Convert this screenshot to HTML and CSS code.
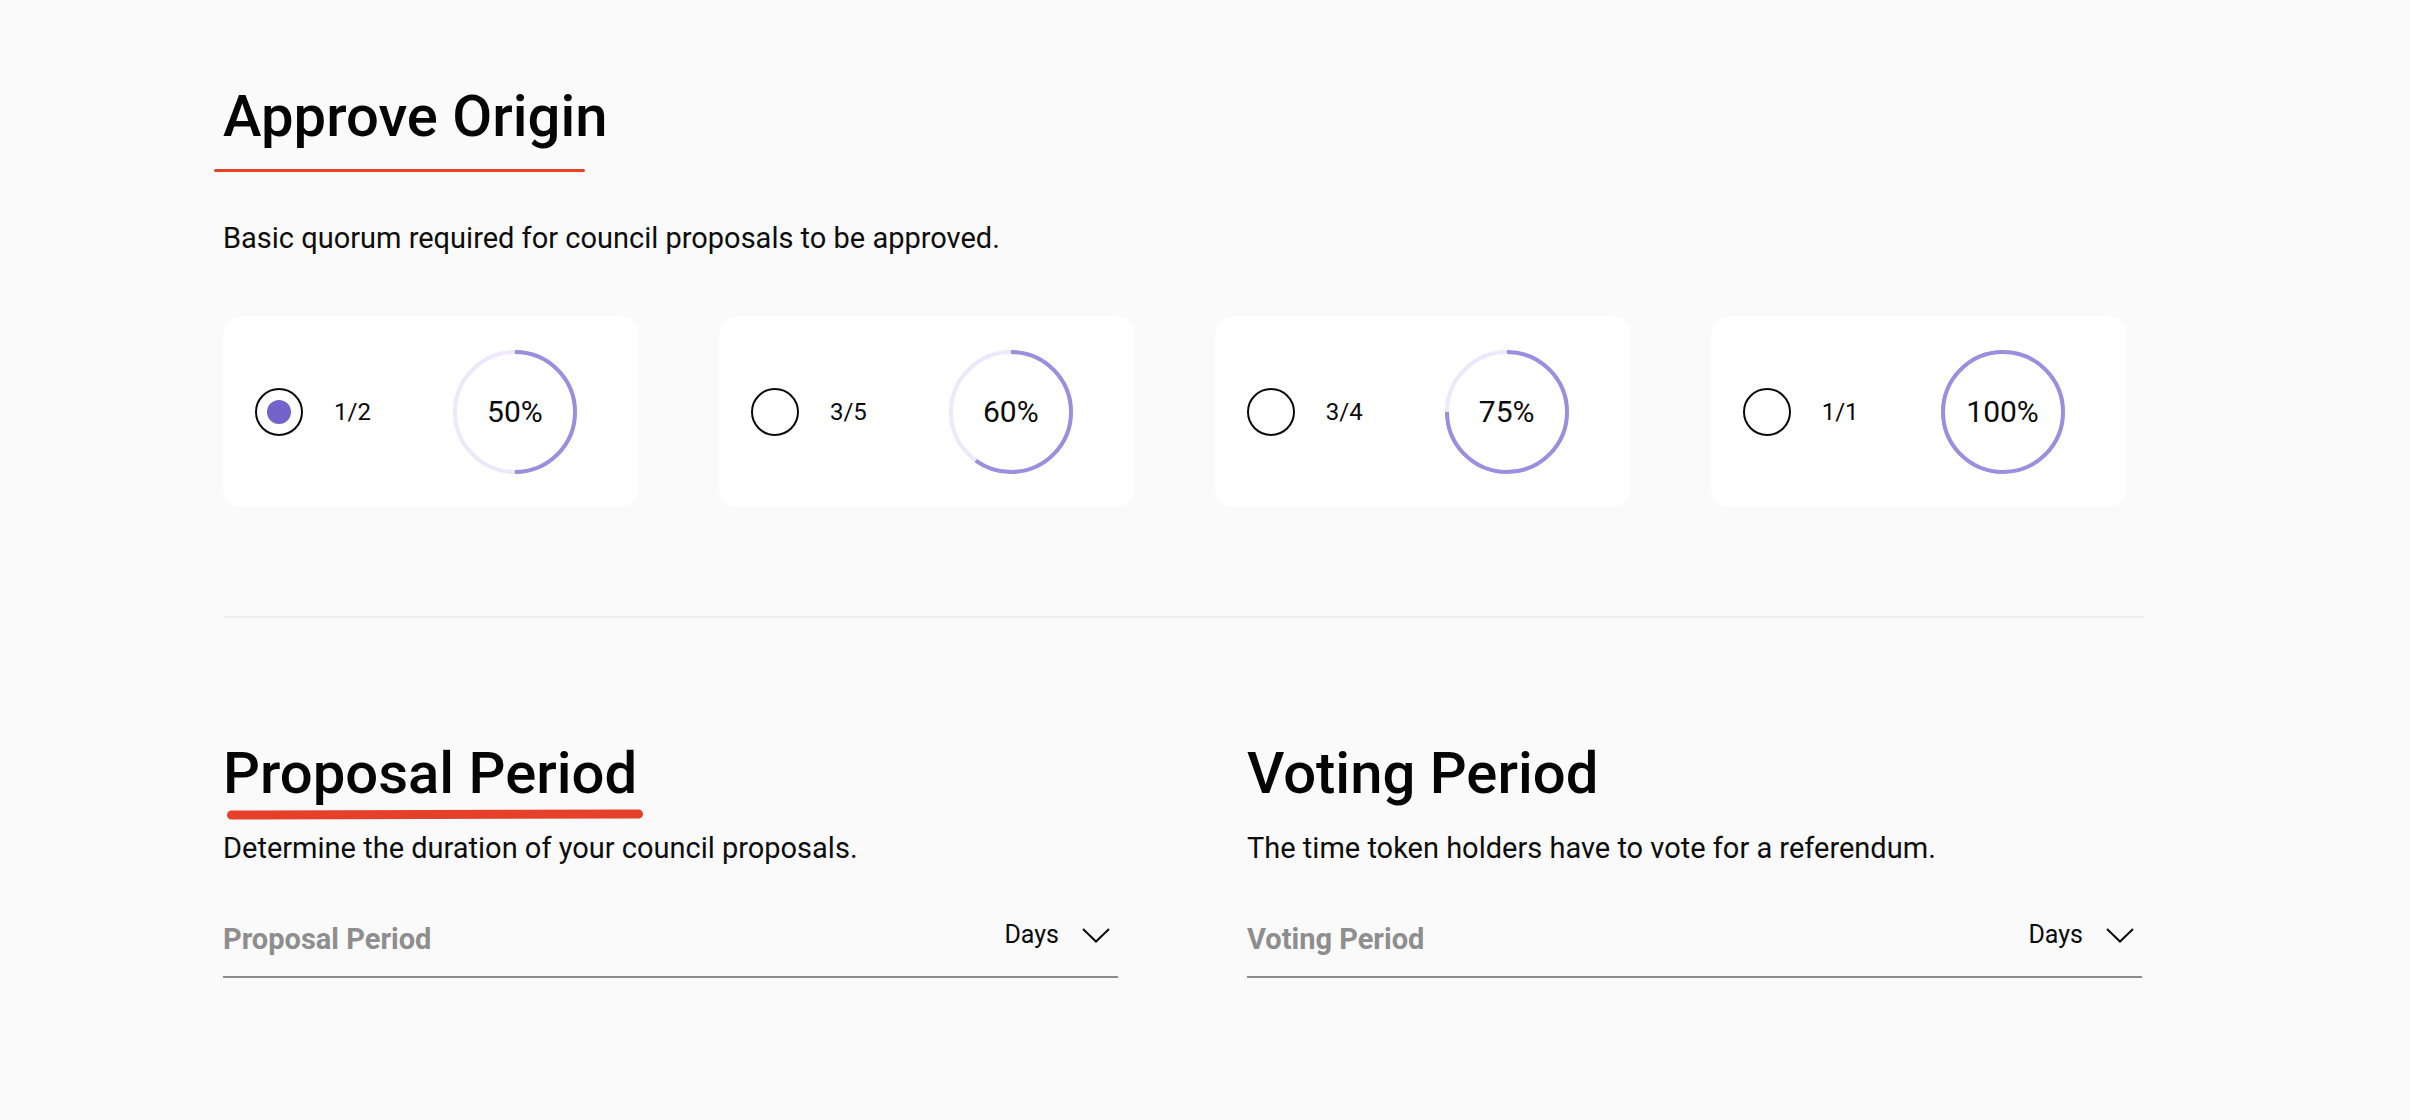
FILE: index.html
```html
<!DOCTYPE html>
<html lang="en">
<head>
<meta charset="utf-8">
<title>Council settings</title>
<link rel="stylesheet" href="styles.css">
</head>
<body>
<main class="page">
  <section class="origin">
    <h1 class="title">Approve Origin</h1>
    <div class="rule-thin"></div>
    <p class="desc desc-origin">Basic quorum required for council proposals to be approved.</p>
    <div class="cards">
      <label class="card">
        <span class="radio radio-on"><span class="dot"></span></span>
        <span class="frac">1/2</span>
        <span class="ring">
          <svg viewBox="0 0 124 124" width="124" height="124"><circle class="track" cx="62" cy="62" r="60"/><circle class="arc" cx="62" cy="62" r="60" pathLength="100" style="stroke-dasharray:50 100"/></svg>
          <span class="pct">50%</span>
        </span>
      </label>
      <label class="card">
        <span class="radio"></span>
        <span class="frac">3/5</span>
        <span class="ring">
          <svg viewBox="0 0 124 124" width="124" height="124"><circle class="track" cx="62" cy="62" r="60"/><circle class="arc" cx="62" cy="62" r="60" pathLength="100" style="stroke-dasharray:60 100"/></svg>
          <span class="pct">60%</span>
        </span>
      </label>
      <label class="card">
        <span class="radio"></span>
        <span class="frac">3/4</span>
        <span class="ring">
          <svg viewBox="0 0 124 124" width="124" height="124"><circle class="track" cx="62" cy="62" r="60"/><circle class="arc" cx="62" cy="62" r="60" pathLength="100" style="stroke-dasharray:75 100"/></svg>
          <span class="pct">75%</span>
        </span>
      </label>
      <label class="card">
        <span class="radio"></span>
        <span class="frac">1/1</span>
        <span class="ring">
          <svg viewBox="0 0 124 124" width="124" height="124"><circle class="track" cx="62" cy="62" r="60"/><circle class="arc" cx="62" cy="62" r="60" pathLength="100" style="stroke-dasharray:100 100"/></svg>
          <span class="pct">100%</span>
        </span>
      </label>
    </div>
  </section>

  <hr class="divider">

  <section class="periods">
    <div class="period">
      <h2 class="title">Proposal Period</h2>
      <div class="brush"></div>
      <p class="desc desc-period">Determine the duration of your council proposals.</p>
      <div class="field">
        <span class="field-label">Proposal Period</span>
        <span class="unit">Days
          <svg class="chev" viewBox="0 0 28 15" width="28" height="15"><path d="M1 1 L14 13.5 L27 1"/></svg>
        </span>
      </div>
    </div>
    <div class="period">
      <h2 class="title">Voting Period</h2>
      <div class="brush brush-none"></div>
      <p class="desc desc-period">The time token holders have to vote for a referendum.</p>
      <div class="field">
        <span class="field-label">Voting Period</span>
        <span class="unit">Days
          <svg class="chev" viewBox="0 0 28 15" width="28" height="15"><path d="M1 1 L14 13.5 L27 1"/></svg>
        </span>
      </div>
    </div>
  </section>
</main>
</body>
</html>
```
FILE: styles.css
```css
html, body {
  margin: 0;
  padding: 0;
  background: #fafafa;
}
body {
  font-family: Roboto, "Noto Sans", sans-serif;
  color: #0b0b0b;
}
.page {
  width: 1919px;
  padding: 87px 0 0 223px;
}
.title {
  margin: 0;
  font-size: 58px;
  line-height: 58px;
  font-weight: 500;
  letter-spacing: 0;
  color: #050505;
}
.rule-thin {
  width: 371px;
  height: 3px;
  margin: 24px 0 0 -9px;
  background: #e8432a;
  border-radius: 2px;
}
.desc {
  margin: 0;
  font-size: 29px;
  line-height: 35px;
  font-weight: 400;
  color: #0d0d0d;
}
.desc-origin {
  margin-top: 49px;
}
.cards {
  display: flex;
  gap: 80px;
  margin-top: 60px;
}
.card {
  display: flex;
  align-items: center;
  height: 191px;
  box-sizing: border-box;
  padding: 0 62px 0 32px;
  background: #ffffff;
  border-radius: 20px;
}
.radio {
  width: 48px;
  height: 48px;
  box-sizing: border-box;
  border: 2px solid #0a0a0a;
  border-radius: 50%;
  display: flex;
  align-items: center;
  justify-content: center;
  flex: none;
}
.dot {
  width: 24px;
  height: 24px;
  border-radius: 50%;
  background: #7262c9;
}
.frac {
  margin-left: 31px;
  margin-right: 82px;
  font-size: 24px;
  line-height: 30px;
}
.ring {
  position: relative;
  width: 124px;
  height: 124px;
  display: flex;
  align-items: center;
  justify-content: center;
  flex: none;
}
.ring svg {
  position: absolute;
  left: 0;
  top: 0;
}
.track {
  fill: none;
  stroke: #ede9fa;
  stroke-width: 4;
}
.arc {
  fill: none;
  stroke: #9b8ede;
  stroke-width: 4;
  transform: rotate(-90deg);
  transform-origin: 62px 62px;
}
.pct {
  position: relative;
  font-size: 30px;
  line-height: 32px;
  color: #0b0b0b;
}
.divider {
  width: 1920px;
  height: 2px;
  margin: 109px 0 0 0;
  border: 0;
  background: #eeeeee;
}
.periods {
  display: grid;
  grid-template-columns: 895px 895px;
  column-gap: 129px;
  margin-top: 126px;
}
.brush {
  width: 416px;
  height: 9px;
  margin: 8px 0 0 4px;
  background: #e7402a;
  border-radius: 5px;
  transform: rotate(-0.15deg);
}
.brush-none {
  background: transparent;
}
.desc-period {
  margin-top: 12px;
}
.field {
  display: flex;
  align-items: center;
  justify-content: space-between;
  margin-top: 54px;
  padding-bottom: 18px;
  border-bottom: 2px solid #8c8c8c;
}
.field-label {
  font-size: 29px;
  line-height: 35px;
  font-weight: 700;
  color: #8e8e8e;
}
.unit {
  display: flex;
  align-items: center;
  gap: 23px;
  margin-right: 8px;
  margin-bottom: 8px;
  font-size: 25px;
  line-height: 30px;
  color: #0b0b0b;
}
.chev {
  fill: none;
  stroke: #0b0b0b;
  stroke-width: 2;
}
```
